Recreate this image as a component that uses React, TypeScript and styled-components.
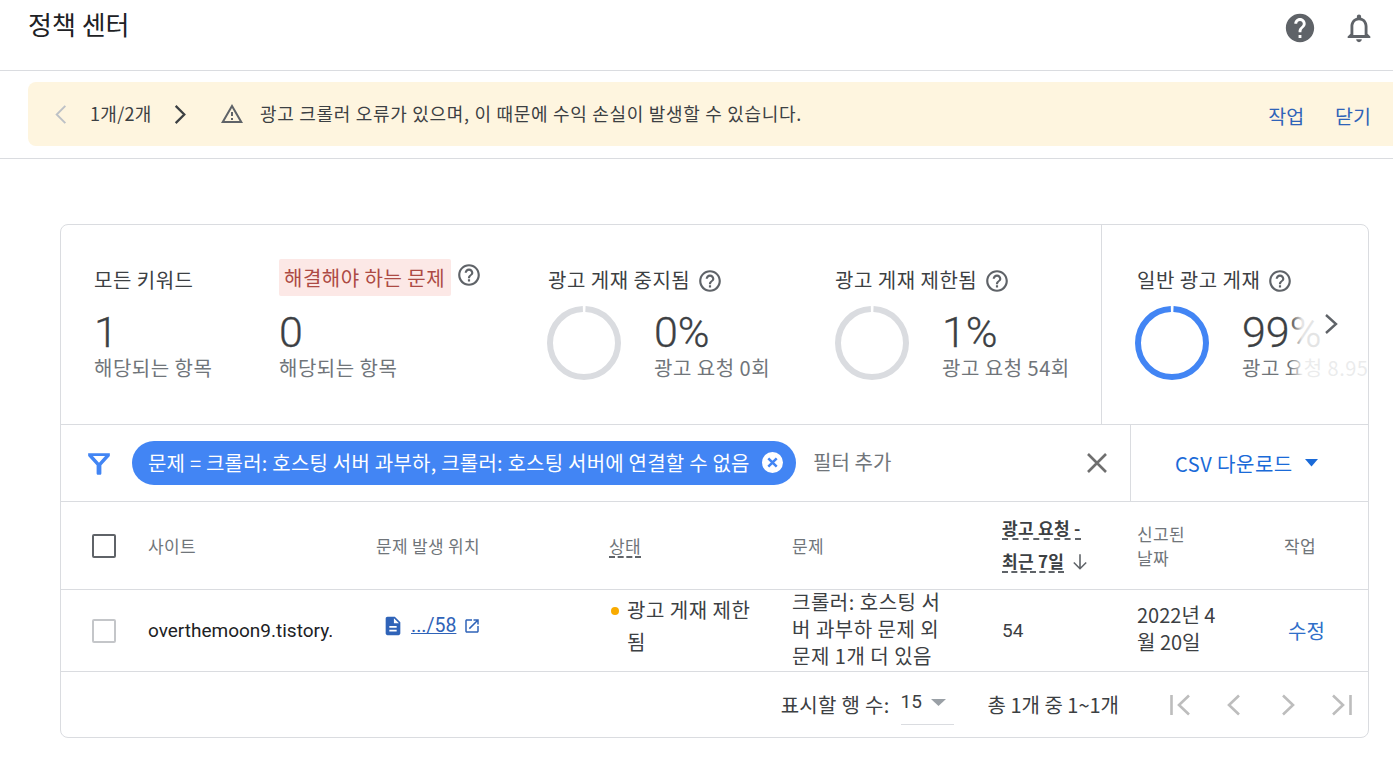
import React from "react";
import styled, { createGlobalStyle } from "styled-components";

const Global = createGlobalStyle`
  html, body { margin: 0; padding: 0; background: #fff; }
  body { font-family: "Noto Sans CJK KR", Roboto, sans-serif; color: #3c4043; overflow: hidden; }
  * { box-sizing: border-box; }
`;
const Page = styled.div`width: 1393px; height: 757px; overflow: hidden;`;
const TopBar = styled.header`
  height: 71px; border-bottom: 1px solid #dadce0; display: flex; justify-content: space-between;
  padding: 7px 17px 0 28px;
`;
const Title = styled.h1`margin: 0; font-size: 26px; font-weight: 400; line-height: 34px; color: #202124;`;
const TopIcons = styled.div`display: flex; gap: 25px; padding-top: 4px; height: 40px;`;
const BannerWrap = styled.div`height: 88px; border-bottom: 1px solid #dadce0; padding: 11px 0 0 28px;`;
const Banner = styled.div`
  height: 64px; background: #fef5df; border-radius: 8px 0 0 8px; display: flex; align-items: center;
  padding: 0 22px 0 22px; font-size: 18px; color: #3c4043; letter-spacing: 0.7px;
`;
const Pager = styled.span`margin: 0 16px 0 17px; width: 62px; white-space: nowrap; letter-spacing: 0.3px; padding-bottom: 2px;`;
const BannerText = styled.span`flex: 1; margin-left: 16px; white-space: nowrap; padding-bottom: 2px;`;
const BannerLink = styled.a`color: #2f63b8; margin-left: 31px; font-size: 19.500px; letter-spacing: 0; padding-top: 3px;`;
const WarnSlot = styled.span`display: inline-flex; align-items: center; margin-left: 29px;`;

const Card = styled.section`
  width: 1309px; height: 514px; margin: 65px 0 0 60px; border: 1px solid #dadce0; border-radius: 8px;
  display: flex; flex-direction: column; position: relative; overflow: hidden;
`;
const Summary = styled.div`height: 200px; border-bottom: 1px solid #dadce0; display: flex; position: relative;`;
const Stat = styled.div<{ $w: number; $bl?: boolean; $pl?: number }>`
  width: ${p => p.$w}px; padding: 37px 0 0 ${p => p.$pl ?? 0}px; flex: none;
  ${p => p.$bl ? "border-left: 1px solid #dadce0;" : ""}
`;
const StatHead = styled.div<{ $pad?: number }>`display: flex; align-items: center; gap: 7px; height: 34px; padding-left: ${p => p.$pad ?? 0}px; font-size: 20px; color: #3c4043; letter-spacing: 0.5px; white-space: nowrap;`;
const Alert = styled.span`background: #fce8e6; color: #ad4a44; border-radius: 2px; height: 37px; display: inline-flex; align-items: center; padding: 0 6px 0 5px; margin-top: -4px;`;
const HeadIcon = styled.span<{ $up?: boolean }>`display: inline-flex; ${p => p.$up ? "margin: -9px 0 0 -2px;" : "margin-top: 3px;"}`;
const Big = styled.div`font-family: Roboto, sans-serif; font-size: 43px; line-height: 48px; color: #3c4043; margin-top: 12px; font-weight: 300; -webkit-text-stroke: 0.3px #3c4043;`;
const Sub = styled.div`font-size: 20px; line-height: 24px; color: #70757a; letter-spacing: 0.5px; white-space: nowrap;`;
const RingRow = styled.div`display: flex; margin-top: 10px; gap: 33px;`;
const RingText = styled.div``;
const RingBig = styled(Big)`margin-top: 2px;`;
const Fade = styled.div`
  position: absolute; top: 60px; right: 0; width: 78px; height: 120px;
  background: linear-gradient(to right, rgba(255,255,255,0), rgba(255,255,255,0.86) 12px, rgba(255,255,255,0.86));
`;
const ScrollBtn = styled.span`position: absolute; right: 30px; top: 88px; display: flex;`;

const FilterRow = styled.div`height: 77px; border-bottom: 1px solid #dadce0; display: flex; align-items: center;`;
const FilterIconSlot = styled.span`width: 71px; padding-left: 25px; display: flex;`;
const Chip = styled.div`
  height: 44px; width: 664px; border-radius: 22px; background: #4285f4; color: #fff; font-size: 20px;
  display: flex; align-items: center; justify-content: space-between; padding: 0 13px 0 16px; white-space: nowrap; letter-spacing: 0.22px; margin-top: -1px;
`;
const ChipText = styled.span`padding-bottom: 1px;`;
const AddFilter = styled.span`margin-left: 17px; font-size: 20px; color: #70757a; flex: 1; padding-bottom: 4px; letter-spacing: 0.1px;`;
const ClearSlot = styled.span`display: flex; margin-right: 21px; padding-bottom: 1px;`;
const CsvCell = styled.div`
  width: 238px; height: 100%; border-left: 1px solid #dadce0; display: flex; align-items: center; padding: 0 0 0 44px;
  color: #1a6ad8; font-size: 20px; gap: 12px; white-space: nowrap; letter-spacing: 0.5px;
`;

const columns = "87px 228px 233px 183px 211px 134px 147px 1fr";
const HeadRow = styled.div`height: 88px; border-bottom: 1px solid #dadce0; display: grid; grid-template-columns: ${columns}; align-items: center; font-size: 17px; letter-spacing: 0.3px; color: #70757a;`;
const BodyRow = styled.div`height: 82px; border-bottom: 1px solid #dadce0; display: grid; grid-template-columns: ${columns}; align-items: center; font-size: 20px; letter-spacing: 0.5px; color: #3c4043;`;
const CheckCell = styled.div`padding-left: 31px; display: flex;`;
const Box = styled.span<{ $light?: boolean }>`
  width: 24px; height: 24px; border-radius: 2px; display: block;
  border: 2px solid ${p => p.$light ? "#c4c6c9" : "#5f6368"};
`;
const Dashed = styled.span`border-bottom: 2px dashed #5f6368; line-height: 20px; display: inline-block;`;
const SortHead = styled.div`font-weight: 700; color: #3c4043; font-size: 17px; margin-left: -1px;`;
const SortLine = styled.div`display: flex; align-items: center; gap: 7px; height: 33px;`;
const TwoLine = styled.div`line-height: 24px;`;
const SiteCell = styled.div`width: 184px; overflow: hidden; white-space: nowrap; font-family: Roboto, sans-serif; font-size: 19px; letter-spacing: 0; color: #202124;`;
const LocCell = styled.div`display: flex; align-items: center; gap: 7px; padding: 0 0 10px 6px;`;
const LocLink = styled.a`color: #2f63b8; text-decoration: underline; font-size: 19.500px; letter-spacing: 0; font-family: Roboto, sans-serif;`;
const StatusCell = styled.div`display: flex; line-height: 32px; margin-top: -9px; width: 150px;`;
const Dot = styled.i`width: 8px; height: 8px; border-radius: 50%; background: #f9ab00; flex: none; margin: 13px 8px 0 2px;`;
const ProblemCell = styled.div`line-height: 27px; width: 155px; margin-top: -5px;`;
const Num = styled.div`font-family: Roboto, sans-serif; font-size: 19px; letter-spacing: 0; margin-left: -1px;`;
const DateCell = styled.div`line-height: 27px; width: 88px; margin-top: -6px; letter-spacing: 0;`;
const EditLink = styled.a`color: #2f6fc9; padding-left: 4px; letter-spacing: 0;`;

const Footer = styled.div`flex: 1; display: flex; align-items: center; justify-content: flex-end; padding-right: 16px; font-size: 20px; color: #3c4043; letter-spacing: 0;`;
const RowsLabel = styled.span`margin-right: 11px; white-space: nowrap; letter-spacing: 0.3px;`;
const RowsSelect = styled.span`
  width: 53px; height: 34px; border-bottom: 1px solid #dadce0; display: flex; gap: 9px; align-items: flex-start;
  font-family: Roboto, sans-serif; font-size: 19px; margin-top: 6px; line-height: 22px; color: #3c4043;
`;
const Count = styled.span`margin: 0 51px 0 34px; white-space: nowrap;`;
const PageIcon = styled.svg<{ $ml?: number }>`margin-left: ${p => p.$ml ?? 0}px; flex: none;`;

const Q = () => (
  <svg width={26} height={26} viewBox="0 0 24 24" fill="#5f6368">
    <path d="M11 18h2v-2h-2v2zm1-16C6.480 2 2 6.480 2 12s4.480 10 10 10 10-4.480 10-10S17.520 2 12 2zm0 18c-4.410 0-8-3.590-8-8s3.590-8 8-8 8 3.590 8 8-3.590 8-8 8zm0-14c-2.210 0-4 1.790-4 4h2c0-1.100.9-2 2-2s2 .9 2 2c0 2-3 1.750-3 5h2c0-2.250 3-2.500 3-5 0-2.210-1.790-4-4-4z" />
  </svg>
);
const Chevron = ({ dir, color, sw = 2 }: { dir: "l" | "r"; color: string; sw?: number }) => (
  <svg width={23} height={23} viewBox="0 0 24 24" fill="none" stroke={color} strokeWidth={sw}>
    <path d={dir === "l" ? "M16 3 7 12l9 9" : "M8 3l9 9-9 9"} />
  </svg>
);
const Ring = ({ color }: { color: string }) => {
  const r = 34;
  const c = 2 * Math.PI * r;
  return (
    <svg width={74} height={74} viewBox="0 0 74 74" style={{ flex: "none" }}>
      <circle cx={37} cy={37} r={r} fill="none" stroke={color} strokeWidth={6}
        strokeDasharray={`${c - 3} 3`} strokeDashoffset={-1.5} transform="rotate(-90 37 37)" />
    </svg>
  );
};

export default function App() {
  return (
    <Page>
      <Global />
      <TopBar>
        <Title>정책 센터</Title>
        <TopIcons>
          <svg width="34" height="34" viewBox="0 0 24 24" fill="#5f6368">
            <path d="M12 2C6.480 2 2 6.480 2 12s4.480 10 10 10 10-4.480 10-10S17.520 2 12 2zm1 17h-2v-2h2v2zm2.070-7.750-.9.920C13.450 12.900 13 13.500 13 15h-2v-.5c0-1.100.450-2.100 1.170-2.830l1.240-1.260c.370-.360.590-.860.590-1.410 0-1.100-.9-2-2-2s-2 .9-2 2H8c0-2.210 1.790-4 4-4s4 1.790 4 4c0 .880-.360 1.680-.930 2.250z" />
          </svg>
          <svg width="34" height="34" viewBox="0 0 24 24" fill="#5f6368">
            <path d="M12 22c1.100 0 2-.9 2-2h-4c0 1.100.9 2 2 2zm6-6v-5c0-3.070-1.630-5.640-4.500-6.320V4c0-.830-.670-1.500-1.500-1.500s-1.500.670-1.500 1.500v.680C7.640 5.360 6 7.920 6 11v5l-2 2v1h16v-1l-2-2zm-2 1H8v-6c0-2.480 1.510-4.500 4-4.500s4 2.020 4 4.500v6z" />
          </svg>
        </TopIcons>
      </TopBar>

      <BannerWrap>
        <Banner>
          <Chevron dir="l" color="#bdc1c6" />
          <Pager>1개/2개</Pager>
          <Chevron dir="r" color="#3c4043" sw={2.400} />
          <WarnSlot>
            <svg width="24" height="24" viewBox="0 0 24 24" fill="#5f6368">
              <path d="M12 5.990 19.530 19H4.470L12 5.990M12 2 1 21h22L12 2zm1 14h-2v2h2v-2zm0-6h-2v4h2v-4z" />
            </svg>
          </WarnSlot>
          <BannerText>광고 크롤러 오류가 있으며, 이 때문에 수익 손실이 발생할 수 있습니다.</BannerText>
          <BannerLink>작업</BannerLink>
          <BannerLink>닫기</BannerLink>
        </Banner>
      </BannerWrap>

      <Card>
        <Summary>
          <Stat $w={218} $pl={33}>
            <StatHead>모든 키워드</StatHead>
            <Big>1</Big>
            <Sub>해당되는 항목</Sub>
          </Stat>
          <Stat $w={268} $pl={0}>
            <StatHead><Alert>해결해야 하는 문제</Alert><HeadIcon $up><Q /></HeadIcon></StatHead>
            <Big>0</Big>
            <Sub>해당되는 항목</Sub>
          </Stat>
          <Stat $w={288}>
            <StatHead $pad={1}>광고 게재 중지됨<HeadIcon><Q /></HeadIcon></StatHead>
            <RingRow>
              <Ring color="#dadce0" />
              <RingText><RingBig>0%</RingBig><Sub>광고 요청 0회</Sub></RingText>
            </RingRow>
          </Stat>
          <Stat $w={266}>
            <StatHead>광고 게재 제한됨<HeadIcon><Q /></HeadIcon></StatHead>
            <RingRow>
              <Ring color="#dadce0" />
              <RingText><RingBig>1%</RingBig><Sub>광고 요청 54회</Sub></RingText>
            </RingRow>
          </Stat>
          <Stat $w={267} $bl $pl={33}>
            <StatHead $pad={2}>일반 광고 게재<HeadIcon><Q /></HeadIcon></StatHead>
            <RingRow>
              <Ring color="#4285f4" />
              <RingText><RingBig>99%</RingBig><Sub>광고 요청 8.95</Sub></RingText>
            </RingRow>
          </Stat>
          <Fade />
          <ScrollBtn>
            <svg width="14" height="22" viewBox="0 0 14 22" fill="none" stroke="#5f6368" strokeWidth="2.400"><path d="M2 2l10 9-10 9" /></svg>
          </ScrollBtn>
        </Summary>

        <FilterRow>
          <FilterIconSlot>
            <svg width="26" height="26" viewBox="0 0 24 24" fill="#4285f4">
              <path d="M2 3h20v2.600L14.200 14v7.400c0 .9-.6 1.400-1.200 1.400h-2c-.6 0-1.200-.5-1.200-1.400V14L2 5.600V3zm4.400 2.600 5.600 6.200 5.600-6.200H6.400z" />
            </svg>
          </FilterIconSlot>
          <Chip>
            <ChipText>문제 = 크롤러: 호스팅 서버 과부하, 크롤러: 호스팅 서버에 연결할 수 없음</ChipText>
            <svg width="21" height="21" viewBox="0 0 20 20">
              <circle cx="10" cy="10" r="10" fill="#fff" />
              <path d="M6 6l8 8M14 6l-8 8" stroke="#4285f4" strokeWidth="2.400" />
            </svg>
          </Chip>
          <AddFilter>필터 추가</AddFilter>
          <ClearSlot>
            <svg width="24" height="24" viewBox="0 0 24 24" stroke="#6f6f6f" strokeWidth="2.600" fill="none">
              <path d="M3 3l18 18M21 3 3 21" />
            </svg>
          </ClearSlot>
          <CsvCell>
            CSV 다운로드
            <svg width="13" height="8" viewBox="0 0 13 8" fill="#1a6ad8"><path d="M0 0h13L6.500 7.500z" /></svg>
          </CsvCell>
        </FilterRow>

        <HeadRow>
          <CheckCell><Box /></CheckCell>
          <span>사이트</span>
          <span>문제 발생 위치</span>
          <span><Dashed>상태</Dashed></span>
          <span>문제</span>
          <SortHead>
            <SortLine><Dashed>광고 요청 -</Dashed></SortLine>
            <SortLine>
              <Dashed>최근 7일</Dashed>
              <svg width="18" height="18" viewBox="0 0 16 16" fill="none" stroke="#5f6368" strokeWidth="1.400">
                <path d="M8 1v13M2.500 8.500 8 14l5.500-5.500" />
              </svg>
            </SortLine>
          </SortHead>
          <TwoLine>신고된<br />날짜</TwoLine>
          <span>작업</span>
        </HeadRow>

        <BodyRow>
          <CheckCell><Box $light /></CheckCell>
          <SiteCell>overthemoon9.tistory.</SiteCell>
          <LocCell>
            <svg width="22" height="22" viewBox="0 0 24 24" fill="#2f63b8">
              <path d="M14 2H6c-1.100 0-2 .9-2 2v16c0 1.100.9 2 2 2h12c1.100 0 2-.9 2-2V8l-6-6zm2 16H8v-2h8v2zm0-4H8v-2h8v2zm-3-5V3.500L18.500 9H13z" />
            </svg>
            <LocLink>.../58</LocLink>
            <svg width="18" height="18" viewBox="0 0 24 24" fill="#2f63b8">
              <path d="M19 19H5V5h7V3H5c-1.110 0-2 .9-2 2v14c0 1.100.890 2 2 2h14c1.100 0 2-.9 2-2v-7h-2v7zM14 3v2h3.590l-9.830 9.830 1.410 1.410L19 6.410V10h2V3h-7z" />
            </svg>
          </LocCell>
          <StatusCell><Dot /><span>광고 게재 제한됨</span></StatusCell>
          <ProblemCell>크롤러: 호스팅 서버 과부하 문제 외 문제 1개 더 있음</ProblemCell>
          <Num>54</Num>
          <DateCell>2022년 4월 20일</DateCell>
          <EditLink>수정</EditLink>
        </BodyRow>

        <Footer>
          <RowsLabel>표시할 행 수:</RowsLabel>
          <RowsSelect>
            15
            <svg width="15" height="20" viewBox="0 0 15 20" fill="#9aa0a6"><path d="M0 8h15l-7.500 7z" /></svg>
          </RowsSelect>
          <Count>총 1개 중 1~1개</Count>
          <PageIcon width="20" height="22" viewBox="0 0 20 22" fill="none" stroke="#bdbdbd" strokeWidth="2.600"><path d="M1.500 1v20M19 1.500 9 11l10 9.500" /></PageIcon>
          <PageIcon $ml={37} width="13" height="22" viewBox="0 0 13 22" fill="none" stroke="#bdbdbd" strokeWidth="2.600"><path d="M12 1.500 2 11l10 9.500" /></PageIcon>
          <PageIcon $ml={42} width="13" height="22" viewBox="0 0 13 22" fill="none" stroke="#bdbdbd" strokeWidth="2.600"><path d="M1 1.500 11 11 1 20.500" /></PageIcon>
          <PageIcon $ml={37} width="20" height="22" viewBox="0 0 20 22" fill="none" stroke="#bdbdbd" strokeWidth="2.600"><path d="M18.500 1v20M1 1.500 11 11 1 20.500" /></PageIcon>
        </Footer>
      </Card>
    </Page>
  );
}
